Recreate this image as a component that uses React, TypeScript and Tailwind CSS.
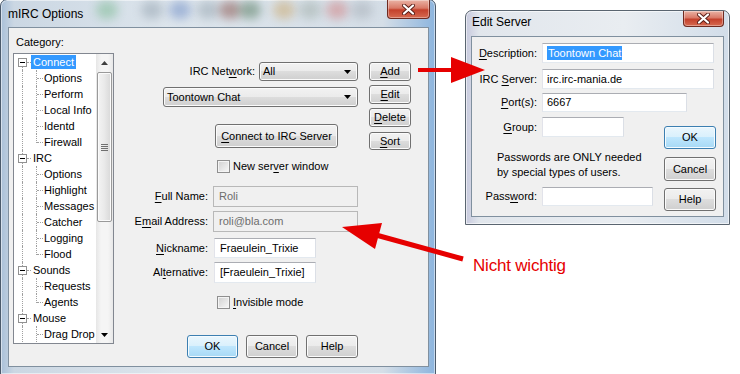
import React from 'react';

const SKIN =
  'flex items-center rounded-[3px] border border-[#707070] bg-[linear-gradient(to_bottom,#f2f2f2_0%,#ebebeb_49%,#dddddd_50%,#cfcfcf_100%)] shadow-[inset_0_0_0_1px_#fbfbfb] text-[11px] text-black';
const BTN = `${SKIN} justify-center`;
const COMBO = `${SKIN} justify-between pl-[3px] pr-[6px]`;
const BTN_FOCUS =
  'flex items-center justify-center rounded-[3px] border border-[#3c7fb1] bg-[linear-gradient(to_bottom,#eaf6fd_0%,#d9f0fc_49%,#bee6fd_50%,#a7d9f5_100%)] shadow-[inset_0_0_0_1px_#f4fbff] text-[11px] text-black';
const INPUT =
  'flex items-center border border-t-[#abadb3] border-l-[#e2e3ea] border-r-[#dbdfe6] border-b-[#e3e9ef] bg-white pl-[4px] text-[11px] text-black';
const INPUT_OFF =
  'flex items-center border border-[#b8b8b8] bg-[#f0f0f0] pl-[5px] text-[11px] text-[#6d6d6d]';
const DOT = 'border-dotted border-[#a0a0a0]';

function U({ children }: { children: React.ReactNode }) {
  return <span className="underline decoration-1 underline-offset-[2px]">{children}</span>;
}

function Arrow() {
  return (
    <svg width="7" height="4" viewBox="0 0 7 4">
      <polygon points="0,0 7,0 3.5,4" fill="#000" />
    </svg>
  );
}

function Check({ children }: { children: React.ReactNode }) {
  return (
    <div className="flex h-[13px] items-center gap-[3px] text-[11px] leading-[13px]">
      <div className="h-[13px] w-[13px] border border-[#8f8f8f] bg-[linear-gradient(135deg,#d0d0d0,#f8f8f8)] shadow-[inset_0_0_0_1px_#f4f4f4]" />
      <span>{children}</span>
    </div>
  );
}

function CloseBtn({ className }: { className: string }) {
  return (
    <div
      className={`absolute flex items-center justify-center rounded-b-[4px] border border-t-0 border-[#6e2a20] bg-[linear-gradient(to_bottom,#eab3a5_0%,#d97a68_45%,#c4412c_55%,#d66a50_100%)] shadow-[inset_0_0_0_1px_rgba(255,255,255,0.35)] ${className}`}
    >
      <svg width="13" height="11" viewBox="0 0 13 11">
        <path d="M2 1.5 L11 9.5 M11 1.5 L2 9.5" stroke="#5a1f18" strokeWidth="4" strokeLinecap="round" />
        <path d="M2 1.5 L11 9.5 M11 1.5 L2 9.5" stroke="#ffffff" strokeWidth="2.2" strokeLinecap="round" />
      </svg>
    </div>
  );
}

type Item = { t: string; root?: boolean; sel?: boolean; last?: boolean };

const TREE: Item[] = [
  { t: 'Connect', root: true, sel: true },
  { t: 'Options' },
  { t: 'Perform' },
  { t: 'Local Info' },
  { t: 'Identd' },
  { t: 'Firewall', last: true },
  { t: 'IRC', root: true },
  { t: 'Options' },
  { t: 'Highlight' },
  { t: 'Messages' },
  { t: 'Catcher' },
  { t: 'Logging' },
  { t: 'Flood', last: true },
  { t: 'Sounds', root: true },
  { t: 'Requests' },
  { t: 'Agents', last: true },
  { t: 'Mouse', root: true },
  { t: 'Drag Drop' },
];

function TreeRow({ item, first }: { item: Item; first: boolean }) {
  if (item.root) {
    return (
      <div className="relative h-[16px] shrink-0 text-[11px]">
        {!first && <div className={`absolute left-[8px] top-0 h-[4px] border-l ${DOT}`} />}
        <div className={`absolute left-[8px] top-[13px] h-[3px] border-l ${DOT}`} />
        <div className="absolute left-[4px] top-[4px] flex h-[9px] w-[9px] items-center justify-center border border-[#919191] bg-white">
          <div className="h-px w-[5px] bg-black" />
        </div>
        <div className={`absolute left-[13px] top-[8px] w-[4px] border-t ${DOT}`} />
        <span
          className={`absolute left-[17px] top-[1px] h-[14px] px-[2px] leading-[14px] ${
            item.sel ? 'bg-[#3399ff] text-white' : 'text-black'
          }`}
        >
          {item.t}
        </span>
      </div>
    );
  }
  return (
    <div className="relative h-[16px] shrink-0 text-[11px]">
      <div className={`absolute left-[8px] top-0 h-[16px] border-l ${DOT}`} />
      <div className={`absolute left-[22px] top-0 border-l ${DOT} ${item.last ? 'h-[9px]' : 'h-[16px]'}`} />
      <div className={`absolute left-[23px] top-[8px] w-[6px] border-t ${DOT}`} />
      <span className="absolute left-[30px] top-[1px] whitespace-nowrap leading-[14px]">{item.t}</span>
    </div>
  );
}

function ScrollBar() {
  return (
    <div className="flex w-[17px] flex-col bg-[linear-gradient(90deg,#e6e6e6,#f5f5f5_30%,#f5f5f5_70%,#e8e8e8)]">
      <div className="flex h-[17px] items-center justify-center">
        <svg width="7" height="4" viewBox="0 0 7 4">
          <polygon points="0,4 7,4 3.5,0" fill="#404040" />
        </svg>
      </div>
      <div className="mx-[1px] mt-[1px] flex h-[150px] flex-col items-center justify-center gap-[1px] rounded-[2px] border border-[#9a9a9a] bg-[linear-gradient(90deg,#f4f4f4,#e9e9e9_50%,#d8d8d8)] shadow-[inset_0_0_0_1px_#fbfbfb]">
        <div className="h-px w-[7px] bg-[#6f6f6f]" />
        <div className="h-px w-[7px] bg-[#6f6f6f]" />
        <div className="h-px w-[7px] bg-[#6f6f6f]" />
        <div className="h-px w-[7px] bg-[#6f6f6f]" />
      </div>
      <div className="flex-1" />
      <div className="flex h-[17px] items-center justify-center">
        <Arrow />
      </div>
    </div>
  );
}

function Blobs({ spots }: { spots: { x: number; c: string }[] }) {
  return (
    <>
      {spots.map((s, i) => (
        <div
          key={i}
          className="absolute top-[1px] h-[18px] w-[22px] rounded-full opacity-45 blur-[5px]"
          style={{ left: s.x, background: s.c }}
        />
      ))}
    </>
  );
}

function MircOptions() {
  return (
    <div className="absolute left-0 top-[-1px] flex h-[376px] w-[436px] flex-col overflow-hidden rounded-t-[7px] border border-[#4b5a6b] bg-[linear-gradient(90deg,#a9c0d8_0%,#cbd7e3_3%,#dde5ec_40%,#d5dee7_88%,#8db5de_100%)] shadow-[inset_0_0_0_1px_rgba(255,255,255,0.5)]">
      <Blobs
        spots={[
          { x: 95, c: '#6fb585' },
          { x: 140, c: '#8a9aa8' },
          { x: 168, c: '#5d7fc0' },
          { x: 196, c: '#8c9ca8' },
          { x: 218, c: '#7a3a30' },
          { x: 238, c: '#3f6a48' },
          { x: 272, c: '#c9a05a' },
          { x: 298, c: '#9aa8a0' },
          { x: 325, c: '#d07070' },
          { x: 350, c: '#a0a8b0' },
        ]}
      />
      <CloseBtn className="left-[386px] top-0 h-[19px] w-[43px]" />
      <div className="relative flex h-[27px] shrink-0 items-center pl-[7px] text-[12px] text-black">mIRC Options</div>
      <div className="relative ml-[7px] flex h-[340px] w-[421px] shrink-0 border border-[#80909f] bg-[#f0f0f0] text-[11px] leading-[13px] text-black">
        {/* category tree */}
        <div className="flex flex-col pl-[4px] pt-[8px]">
          <div className="ml-[3px] h-[13px] leading-[13px]">Category:</div>
          <div className="mt-[4px] flex h-[291px] w-[101px] border border-[#828790] bg-white">
            <div className="flex w-[82px] flex-col overflow-hidden">
              {TREE.map((it, i) => (
                <TreeRow key={i} item={it} first={i === 0} />
              ))}
            </div>
            <ScrollBar />
          </div>
        </div>

        {/* form */}
        <div className="flex w-[244px] flex-col pt-[34px]">
          <div className="flex h-[19px] items-center justify-end">
            <span className="mr-[4px]">
              IRC Net<U>w</U>ork:
            </span>
            <div className={`${COMBO} h-[19px] w-[99px]`}>
              <span>All</span>
              <Arrow />
            </div>
          </div>
          <div className={`${COMBO} mt-[6px] h-[20px] w-[195px] self-end`}>
            <span>Toontown Chat</span>
            <Arrow />
          </div>
          <div className={`${BTN} ml-[101px] mt-[17px] h-[24px] w-[123px]`}>
            <span>
              <U>C</U>onnect to IRC Server
            </span>
          </div>
          <div className="ml-[103px] mt-[12px]">
            <Check>
              New ser<U>v</U>er window
            </Check>
          </div>
          <div className="mt-[13px] flex h-[21px] items-center">
            <span className="w-[94px] text-right">
              <U>F</U>ull Name:
            </span>
            <div className={`${INPUT_OFF} ml-[5px] h-[21px] w-[145px]`}>Roli</div>
          </div>
          <div className="mt-[4px] flex h-[21px] items-center">
            <span className="w-[94px] text-right">
              E<U>m</U>ail Address:
            </span>
            <div className={`${INPUT_OFF} ml-[5px] h-[21px] w-[145px]`}>roli@bla.com</div>
          </div>
          <div className="mt-[6px] flex h-[20px] items-center">
            <span className="w-[94px] text-right">
              <U>N</U>ickname:
            </span>
            <div className={`${INPUT} ml-[6px] h-[20px] w-[102px] pl-[5px]`}>Fraeulein_Trixie</div>
          </div>
          <div className="mt-[4px] flex h-[21px] items-center">
            <span className="w-[94px] text-right">
              Al<U>t</U>ernative:
            </span>
            <div className={`${INPUT} ml-[6px] h-[21px] w-[102px] pl-[5px]`}>[Fraeulein_Trixie]</div>
          </div>
          <div className="ml-[103px] mt-[13px]">
            <Check>
              <U>I</U>nvisible mode
            </Check>
          </div>
          <div className="ml-[73px] mt-[26px] flex gap-[8px]">
            <div className={`${BTN_FOCUS} h-[23px] w-[51px]`}>OK</div>
            <div className={`${BTN} h-[23px] w-[52px]`}>Cancel</div>
            <div className={`${BTN} h-[23px] w-[52px]`}>Help</div>
          </div>
        </div>

        {/* side buttons */}
        <div className="ml-[11px] flex flex-col pt-[34px]">
          <div className={`${BTN} h-[19px] w-[42px]`}>
            <span>
              <U>A</U>dd
            </span>
          </div>
          <div className={`${BTN} mt-[4px] h-[19px] w-[42px]`}>
            <span>
              <U>E</U>dit
            </span>
          </div>
          <div className={`${BTN} mt-[4px] h-[19px] w-[42px]`}>
            <span>
              <U>D</U>elete
            </span>
          </div>
          <div className={`${BTN} mt-[5px] h-[18px] w-[42px]`}>
            <span>
              <U>S</U>ort
            </span>
          </div>
        </div>
      </div>
    </div>
  );
}

function EditServer() {
  return (
    <div className="absolute left-[465px] top-[10px] flex h-[215px] w-[265px] flex-col overflow-hidden rounded-t-[7px] border border-[#5a6570] bg-[linear-gradient(90deg,#c7c9dd_0%,#e1e6ec_5%,#e9edf1_60%,#d2dde9_100%)] shadow-[inset_0_0_0_1px_rgba(255,255,255,0.6)]">
      <CloseBtn className="left-[217px] top-0 h-[16px] w-[41px]" />
      <div className="h-[25px] shrink-0 pl-[6px] pt-[4px] text-[12px] leading-[14px] text-black">Edit Server</div>
      <div className="ml-[5px] flex h-[181px] w-[253px] shrink-0 flex-col border border-[#80909f] bg-[#f0f0f0] text-[11px] leading-[13px] text-black">
        <div className="mt-[6px] flex h-[20px] items-center">
          <span className="w-[65px] text-right">
            <U>D</U>escription:
          </span>
          <div className={`${INPUT} ml-[5px] h-[20px] w-[172px]`}>
            <span className="bg-[#3399ff] px-[1px] leading-[14px] text-white">Toontown Chat</span>
          </div>
        </div>
        <div className="mt-[6px] flex h-[20px] items-center">
          <span className="w-[65px] text-right">
            IRC <U>S</U>erver:
          </span>
          <div className={`${INPUT} ml-[5px] h-[20px] w-[172px]`}>irc.irc-mania.de</div>
        </div>
        <div className="mt-[4px] flex h-[19px] items-center">
          <span className="w-[65px] text-right">
            <U>P</U>ort(s):
          </span>
          <div className={`${INPUT} ml-[5px] h-[19px] w-[145px]`}>6667</div>
        </div>
        <div className="mt-[5px] flex">
          <div className="flex w-[183px] flex-col">
            <div className="flex h-[20px] items-center">
              <span className="w-[65px] text-right">
                <U>G</U>roup:
              </span>
              <div className={`${INPUT} ml-[5px] h-[20px] w-[82px]`} />
            </div>
            <div className="mt-[13px] pl-[25px] leading-[15px]">
              Passwords are ONLY needed
              <br />
              by special types of users.
            </div>
            <div className="mt-[7px] flex h-[19px] items-center">
              <span className="w-[65px] text-right">
                Pass<U>w</U>ord:
              </span>
              <div className={`${INPUT} ml-[5px] h-[19px] w-[111px]`} />
            </div>
          </div>
          <div className="ml-[9px] flex flex-col pt-[9px]">
            <div className={`${BTN_FOCUS} h-[23px] w-[52px]`}>OK</div>
            <div className={`${BTN} mt-[8px] h-[24px] w-[52px]`}>Cancel</div>
            <div className={`${BTN} mt-[7px] h-[23px] w-[52px]`}>Help</div>
          </div>
        </div>
      </div>
    </div>
  );
}

export default function App() {
  return (
    <div className="relative h-[374px] w-[740px] overflow-hidden bg-white font-['Liberation_Sans',Arial,sans-serif]">
      <MircOptions />
      <EditServer />

      {/* annotation arrows */}
      <svg className="pointer-events-none absolute left-0 top-0" width="740" height="374" viewBox="0 0 740 374">
        <polygon points="418,68 456,68 456,72 418,72" fill="#e60000" />
        <polygon points="451,57 485,70 451,83" fill="#e60000" />
        <line x1="463" y1="259" x2="376" y2="235" stroke="#e60000" strokeWidth="5" />
        <polygon points="342,227 382,223 375,249" fill="#e60000" />
      </svg>
      <div className="absolute left-[473px] top-[257px] text-[17px] leading-[18px] tracking-[-0.2px] text-[#e60000]">
        Nicht wichtig
      </div>
    </div>
  );
}
